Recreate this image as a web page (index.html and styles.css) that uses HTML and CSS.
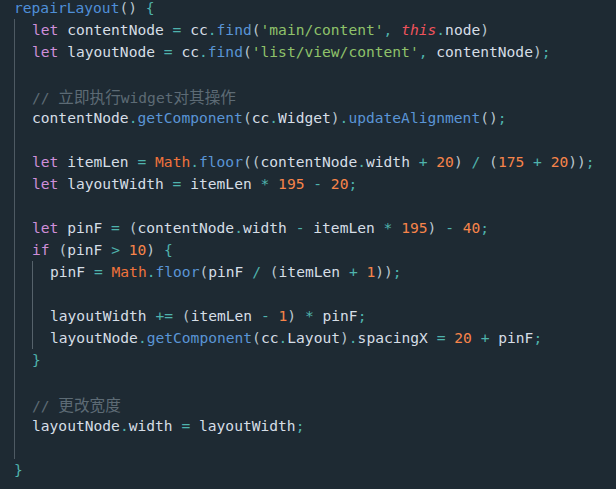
FILE: index.html
```html
<!DOCTYPE html>
<html>
<head>
<meta charset="utf-8">
<link rel="stylesheet" href="styles.css">
</head>
<body>
<div class="code">
<div class="ln"><span class="fn">repairLayout</span><span class="p">()</span> <span class="op">{</span></div>
<div class="blk">
<div class="ln"><span class="kw">let</span> <span class="v">contentNode</span> <span class="op">=</span> <span class="v">cc</span><span class="op">.</span><span class="m">find</span><span class="p">(</span><span class="s">'main/content'</span><span class="op">,</span> <span class="th">this</span><span class="op">.</span><span class="v">node</span><span class="p">)</span></div>
<div class="ln"><span class="kw">let</span> <span class="v">layoutNode</span> <span class="op">=</span> <span class="v">cc</span><span class="op">.</span><span class="m">find</span><span class="p">(</span><span class="s">'list/view/content'</span><span class="op">,</span> <span class="v">contentNode</span><span class="p">)</span><span class="op">;</span></div>
<div class="ln"></div>
<div class="ln"><span class="c">// <span class="cj">立即执行</span>widget<span class="cj">对其操作</span></span></div>
<div class="ln"><span class="v">contentNode</span><span class="op">.</span><span class="m">getComponent</span><span class="p">(</span><span class="v">cc</span><span class="op">.</span><span class="v">Widget</span><span class="p">)</span><span class="op">.</span><span class="m">updateAlignment</span><span class="p">()</span><span class="op">;</span></div>
<div class="ln"></div>
<div class="ln"><span class="kw">let</span> <span class="v">itemLen</span> <span class="op">=</span> <span class="ma">Math</span><span class="op">.</span><span class="m">floor</span><span class="p">((</span><span class="v">contentNode</span><span class="op">.</span><span class="v">width</span> <span class="op">+</span> <span class="n">20</span><span class="p">)</span> <span class="op">/</span> <span class="p">(</span><span class="n">175</span> <span class="op">+</span> <span class="n">20</span><span class="p">))</span><span class="op">;</span></div>
<div class="ln"><span class="kw">let</span> <span class="v">layoutWidth</span> <span class="op">=</span> <span class="v">itemLen</span> <span class="op">*</span> <span class="n">195</span> <span class="op">-</span> <span class="n">20</span><span class="op">;</span></div>
<div class="ln"></div>
<div class="ln"><span class="kw">let</span> <span class="v">pinF</span> <span class="op">=</span> <span class="p">(</span><span class="v">contentNode</span><span class="op">.</span><span class="v">width</span> <span class="op">-</span> <span class="v">itemLen</span> <span class="op">*</span> <span class="n">195</span><span class="p">)</span> <span class="op">-</span> <span class="n">40</span><span class="op">;</span></div>
<div class="ln"><span class="kw">if</span> <span class="p">(</span><span class="v">pinF</span> <span class="op">&gt;</span> <span class="n">10</span><span class="p">)</span> <span class="op">{</span></div>
<div class="blk">
<div class="ln"><span class="v">pinF</span> <span class="op">=</span> <span class="ma">Math</span><span class="op">.</span><span class="m">floor</span><span class="p">(</span><span class="v">pinF</span> <span class="op">/</span> <span class="p">(</span><span class="v">itemLen</span> <span class="op">+</span> <span class="n">1</span><span class="p">))</span><span class="op">;</span></div>
<div class="ln"></div>
<div class="ln"><span class="v">layoutWidth</span> <span class="op">+=</span> <span class="p">(</span><span class="v">itemLen</span> <span class="op">-</span> <span class="n">1</span><span class="p">)</span> <span class="op">*</span> <span class="v">pinF</span><span class="op">;</span></div>
<div class="ln"><span class="v">layoutNode</span><span class="op">.</span><span class="m">getComponent</span><span class="p">(</span><span class="v">cc</span><span class="op">.</span><span class="v">Layout</span><span class="p">)</span><span class="op">.</span><span class="v">spacingX</span> <span class="op">=</span> <span class="n">20</span> <span class="op">+</span> <span class="v">pinF</span><span class="op">;</span></div>
</div>
<div class="ln"><span class="op">}</span></div>
<div class="ln"></div>
<div class="ln"><span class="c">// <span class="cj">更改宽度</span></span></div>
<div class="ln"><span class="v">layoutNode</span><span class="op">.</span><span class="v">width</span> <span class="op">=</span> <span class="v">layoutWidth</span><span class="op">;</span></div>
<div class="ln"></div>
</div>
<div class="ln"><span class="op">}</span></div>
</div>
</body>
</html>
```

FILE: styles.css
```css
html, body {
  margin: 0;
  padding: 0;
  background: #1e2a33;
  height: 100%;
  overflow: hidden;
}

.code {
  margin-top: -3px;
  padding-left: 14px;
  font-family: "DejaVu Sans Mono", "Noto Sans CJK SC", monospace;
  font-size: 14.6px;
  color: #d6dee6;
}

.ln {
  height: 22px;
  line-height: 22px;
  white-space: pre;
}

.blk {
  border-left: 1px solid #4e5a63;
  padding-left: 17px;
}

.blk .blk {
  border-left-color: #56626b;
}

.cj {
  font-family: "Noto Sans CJK SC", sans-serif;
  font-size: 15.6px;
}

.fn { color: #4f8fd8; }
.kw { color: #cf8fd9; }
.v { color: #d6dee6; }
.s { color: #8fc26a; }
.th { color: #f0535c; font-style: italic; }
.ma { color: #f0733c; }
.n { color: #f7844a; }
.op { color: #4fb3ad; }
.p { color: #b9c5cd; }
.m { color: #5a95d6; }
.c { color: #5d6b75; }
```
